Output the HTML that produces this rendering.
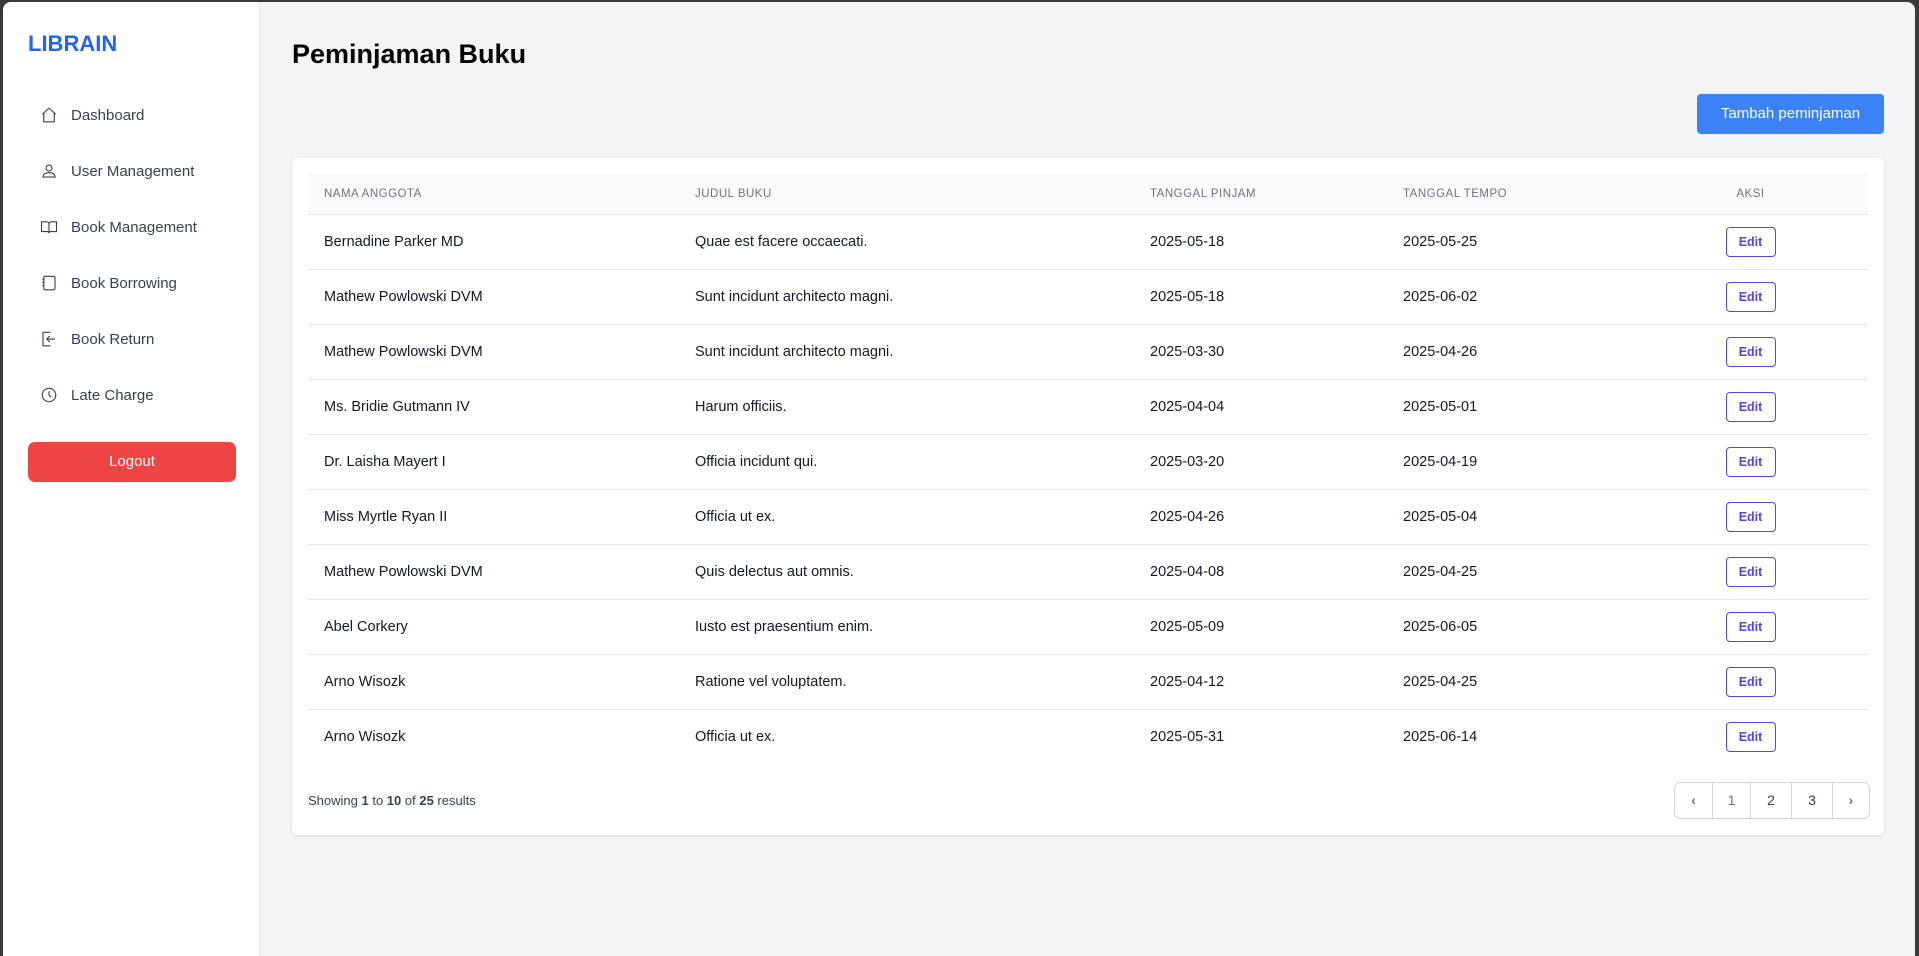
<!DOCTYPE html>
<html><head><meta charset="utf-8"><style>
*{box-sizing:border-box;margin:0;padding:0}
body{width:1919px;height:956px;background:#3a3a3a;font-family:"Liberation Sans",sans-serif;position:relative;overflow:hidden}
.frame{position:absolute;left:3px;top:2px;width:1912px;height:954px;background:#f3f4f6;border-radius:8px 8px 0 0;overflow:hidden}
.side{position:absolute;left:0;top:0;width:257px;height:100%;background:#fff;border-right:1px solid #e5e7eb}
.logo{position:absolute;left:25px;top:29px;font-size:22px;font-weight:bold;color:#2563eb}
.nav{position:absolute;left:37px;display:flex;align-items:center;font-size:15px;color:#374151}
.nav svg{width:18px;height:18px;margin-right:13px;stroke:#374151;fill:none;stroke-width:1.5}
.logout{position:absolute;left:25px;top:440px;width:208px;height:40px;background:#ef4444;border-radius:7px;color:#fff;font-size:15px;text-align:center;line-height:40px}
h1{position:absolute;left:289px;top:37px;font-size:27px;font-weight:bold;color:#000}
.add{position:absolute;left:1694px;top:92px;width:187px;height:40px;background:#3b82f6;border-radius:4px;color:#fff;font-size:15px;text-align:center;line-height:40px}
.card{position:absolute;left:289px;top:156px;width:1592px;height:677px;background:#fff;border-radius:6px;box-shadow:0 1px 3px rgba(0,0,0,.1)}
table{position:absolute;left:16px;top:16px;width:1560px;border-collapse:collapse;table-layout:fixed}
th{height:40px;background:#f9fafb;font-size:11.5px;color:#6b7280;font-weight:normal;text-align:left;letter-spacing:.5px;border-bottom:1px solid #e5e7eb}
td{height:55px;font-size:14.5px;color:#111827;border-bottom:1px solid #e5e7eb}
tr:last-child td{border-bottom:none}
.edit{display:inline-block;width:50px;height:30px;border:1px solid #4f46e5;border-radius:4px;color:#4f46e5;font-size:12.5px;font-weight:bold;line-height:28px;text-align:center}
.show{position:absolute;left:16px;top:635px;font-size:13px;color:#374151}
.pg{position:absolute;left:1382px;top:624px;height:37px;display:flex;border:1px solid #d1d5db;border-radius:6px;overflow:hidden}
.pg div{height:35px;line-height:35px;text-align:center;font-size:14px;color:#374151;border-left:1px solid #d1d5db}
.pg div:first-child{border-left:none}
</style></head><body><div class="frame">
<div class="side">
<div class="logo">LIBRAIN</div>
<div class="nav" style="top:104px"><svg viewBox="0 0 24 24"><path d="M3 11l9-8 9 8M5 9v12h14V9"/></svg>Dashboard</div>
<div class="nav" style="top:160px"><svg viewBox="0 0 24 24"><circle cx="12" cy="8" r="4"/><path d="M4 20c0-4 4-6 8-6s8 2 8 6z"/></svg>User Management</div>
<div class="nav" style="top:216px"><svg viewBox="0 0 24 24"><path d="M2 5h7a3 3 0 013 3v12a3 3 0 00-3-2H2zM22 5h-7a3 3 0 00-3 3v12a3 3 0 013-2h7z"/></svg>Book Management</div>
<div class="nav" style="top:272px"><svg viewBox="0 0 24 24"><rect x="5" y="3" width="15" height="18" rx="2"/><path d="M3 7h3M3 11h3M3 15h3"/></svg>Book Borrowing</div>
<div class="nav" style="top:328px"><svg viewBox="0 0 24 24"><path d="M14 3H4v18h10M20 12H9m4-4l-4 4 4 4"/></svg>Book Return</div>
<div class="nav" style="top:384px"><svg viewBox="0 0 24 24"><circle cx="12" cy="12" r="9"/><path d="M12 7v5l3 3"/></svg>Late Charge</div>
<div class="logout">Logout</div>
</div>
<h1>Peminjaman Buku</h1>
<div class="add">Tambah peminjaman</div>
<div class="card">
<table>
<colgroup><col style="width:387px"><col style="width:455px"><col style="width:253px"><col style="width:230px"><col></colgroup>
<tr><th style="padding-left:16px">NAMA ANGGOTA</th><th>JUDUL BUKU</th><th>TANGGAL PINJAM</th><th>TANGGAL TEMPO</th><th style="text-align:center">AKSI</th></tr>
<tr><td style="padding-left:16px">Bernadine Parker MD</td><td>Quae est facere occaecati.</td><td>2025-05-18</td><td>2025-05-25</td><td align="center"><span class="edit">Edit</span></td></tr>
<tr><td style="padding-left:16px">Mathew Powlowski DVM</td><td>Sunt incidunt architecto magni.</td><td>2025-05-18</td><td>2025-06-02</td><td align="center"><span class="edit">Edit</span></td></tr>
<tr><td style="padding-left:16px">Mathew Powlowski DVM</td><td>Sunt incidunt architecto magni.</td><td>2025-03-30</td><td>2025-04-26</td><td align="center"><span class="edit">Edit</span></td></tr>
<tr><td style="padding-left:16px">Ms. Bridie Gutmann IV</td><td>Harum officiis.</td><td>2025-04-04</td><td>2025-05-01</td><td align="center"><span class="edit">Edit</span></td></tr>
<tr><td style="padding-left:16px">Dr. Laisha Mayert I</td><td>Officia incidunt qui.</td><td>2025-03-20</td><td>2025-04-19</td><td align="center"><span class="edit">Edit</span></td></tr>
<tr><td style="padding-left:16px">Miss Myrtle Ryan II</td><td>Officia ut ex.</td><td>2025-04-26</td><td>2025-05-04</td><td align="center"><span class="edit">Edit</span></td></tr>
<tr><td style="padding-left:16px">Mathew Powlowski DVM</td><td>Quis delectus aut omnis.</td><td>2025-04-08</td><td>2025-04-25</td><td align="center"><span class="edit">Edit</span></td></tr>
<tr><td style="padding-left:16px">Abel Corkery</td><td>Iusto est praesentium enim.</td><td>2025-05-09</td><td>2025-06-05</td><td align="center"><span class="edit">Edit</span></td></tr>
<tr><td style="padding-left:16px">Arno Wisozk</td><td>Ratione vel voluptatem.</td><td>2025-04-12</td><td>2025-04-25</td><td align="center"><span class="edit">Edit</span></td></tr>
<tr><td style="padding-left:16px">Arno Wisozk</td><td>Officia ut ex.</td><td>2025-05-31</td><td>2025-06-14</td><td align="center"><span class="edit">Edit</span></td></tr>
</table>
<div class="show">Showing <b>1</b> to <b>10</b> of <b>25</b> results</div>
<div class="pg"><div style="width:37px;font-weight:bold;color:#6b7280">‹</div><div style="width:38px;color:#6b7280">1</div><div style="width:41px">2</div><div style="width:41px">3</div><div style="width:37px;font-weight:bold;color:#6b7280">›</div></div>
</div>
</div></body></html>
